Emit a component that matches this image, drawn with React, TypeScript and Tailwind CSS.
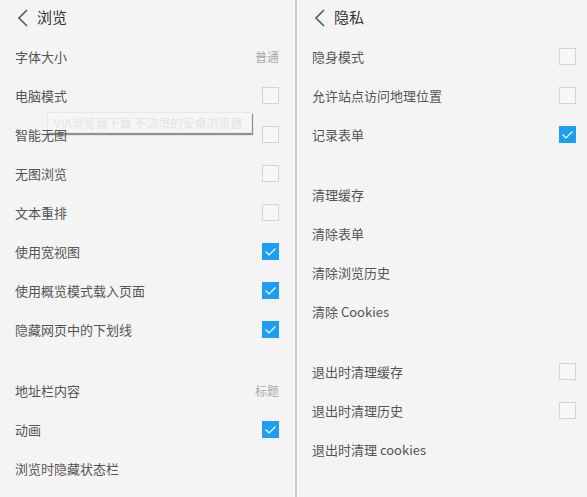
import React from "react";

const font = { fontFamily: '"Noto Sans CJK SC", "Noto Sans", sans-serif' };

function Chevron() {
  return (
    <svg width="12" height="18" viewBox="0 0 12 18" className="shrink-0">
      <path d="M10 1 L2 9 L10 17" fill="none" stroke="#555" strokeWidth="1.6" />
    </svg>
  );
}

function Box({ checked }: { checked?: boolean }) {
  if (checked)
    return (
      <div className="w-[17px] h-[17px] bg-[#1e9ef0] flex items-center justify-center">
        <svg width="13" height="10" viewBox="0 0 13 10">
          <path d="M1.5 4.5 L5 8 L11.5 1.5" fill="none" stroke="#fff" strokeWidth="1.2" />
        </svg>
      </div>
    );
  return <div className="w-[17px] h-[17px] border border-[#d4d4d4] bg-[#f7f7f7]" />;
}

type Row = { label: string; value?: string; box?: "on" | "off" };

function RowView({ r }: { r: Row }) {
  return (
    <div className="relative z-10 h-[39px] flex items-center justify-between">
      <span className="text-[13px] text-[#555]">{r.label}</span>
      {r.value && <span className="text-[12px] text-[#aaa]">{r.value}</span>}
      {r.box && <Box checked={r.box === "on"} />}
    </div>
  );
}

export default function App() {
  const left1: Row[] = [
    { label: "字体大小", value: "普通" },
    { label: "电脑模式", box: "off" },
    { label: "智能无图", box: "off" },
    { label: "无图浏览", box: "off" },
    { label: "文本重排", box: "off" },
    { label: "使用宽视图", box: "on" },
    { label: "使用概览模式载入页面", box: "on" },
    { label: "隐藏网页中的下划线", box: "on" },
  ];
  const left2: Row[] = [
    { label: "地址栏内容", value: "标题" },
    { label: "动画", box: "on" },
    { label: "浏览时隐藏状态栏" },
  ];
  const r1: Row[] = [
    { label: "隐身模式", box: "off" },
    { label: "允许站点访问地理位置", box: "off" },
    { label: "记录表单", box: "on" },
  ];
  const r2: Row[] = [
    { label: "清理缓存" },
    { label: "清除表单" },
    { label: "清除浏览历史" },
    { label: "清除 Cookies" },
  ];
  const r3: Row[] = [
    { label: "退出时清理缓存", box: "off" },
    { label: "退出时清理历史", box: "off" },
    { label: "退出时清理 cookies" },
  ];
  return (
    <div style={font} className="w-[587px] h-[497px] bg-[#f4f4f4] flex overflow-hidden">
      <div className="relative w-[295px] h-full pl-[15px] pr-[16px] flex flex-col">
        <div className="h-[37px] flex items-center gap-[8px] pl-[2px] pb-[2px]">
          <Chevron />
          <span className="text-[15px] text-[#333]">浏览</span>
        </div>
        {left1.map((r) => (
          <RowView key={r.label} r={r} />
        ))}
        <div className="h-[22px]" />
        {left2.map((r) => (
          <RowView key={r.label} r={r} />
        ))}
        <div className="absolute z-0 left-[47px] top-[112px] w-[205px] h-[21px] bg-[#f6f6f6] border border-[#e8e8e8] shadow-[1px_2px_1px_rgba(0,0,0,0.4)] flex items-center pl-[6px] text-[12px] text-[#e3e3e3] whitespace-nowrap">
          VIA浏览器下载 不流氓的安卓浏览器
        </div>
      </div>
      <div className="w-[2px] h-full bg-[#cdcdcd]" />
      <div className="flex-1 h-full pl-[15px] pr-[11px] flex flex-col">
        <div className="h-[37px] flex items-center gap-[8px] pl-[2px] pb-[2px]">
          <Chevron />
          <span className="text-[15px] text-[#333]">隐私</span>
        </div>
        {r1.map((r) => (
          <RowView key={r.label} r={r} />
        ))}
        <div className="h-[21px]" />
        {r2.map((r) => (
          <RowView key={r.label} r={r} />
        ))}
        <div className="h-[21px]" />
        {r3.map((r) => (
          <RowView key={r.label} r={r} />
        ))}
      </div>
    </div>
  );
}
